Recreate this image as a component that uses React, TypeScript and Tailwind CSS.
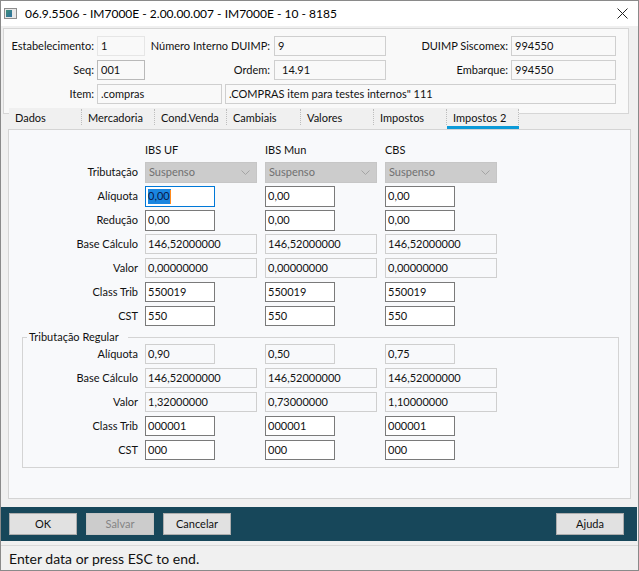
import React from "react";

type Kind = "faint" | "ro" | "roDark" | "edit" | "focus" | "disabled";

const fieldStyles: Record<Kind, string> = {
  faint: "border-[#e6e6e6] bg-[#f9f9f9]",
  ro: "border-[#cfcfcf] bg-[#f9f9f9]",
  roDark: "border-[#b9b9b9] bg-[#f9f9f9]",
  edit: "border-[#7a7a7a] bg-white",
  focus: "border-[#0078d7] bg-white",
  disabled: "border-[#cfcfcf] bg-[#f8f9fb]",
};

function Field({
  w,
  h = "h-[20px]",
  value,
  kind = "ro",
  pad = "pl-[3px]",
}: {
  w: string;
  h?: string;
  value: string;
  kind?: Kind;
  pad?: string;
}) {
  return (
    <div
      className={`${w} ${h} ${pad} shrink-0 border ${fieldStyles[kind]} flex items-center text-[11px] text-[#111] whitespace-nowrap overflow-hidden`}
    >
      {kind === "focus" ? (
        <span className="flex items-center h-[15px] bg-[#1a86e0] text-[#0a1a4a]">
          {value}
          <span className="w-px h-[14px] bg-[#ff8a1c]" />
        </span>
      ) : (
        value
      )}
    </div>
  );
}

function Select() {
  return (
    <div className="w-[112px] h-[21px] border border-[#c6c6c6] bg-[#cccccc] flex items-center justify-between pl-[3px] pr-[6px] text-[11px] text-[#707070]">
      <span>Suspenso</span>
      <svg width="9" height="6" viewBox="0 0 9 6">
        <path d="M0.5 0.5 L4.5 4.5 L8.5 0.5" fill="none" stroke="#a4a4a4" strokeWidth="1" />
      </svg>
    </div>
  );
}

type Cell = { value: string; kind: Kind; wide?: boolean };

function TaxRow({
  label,
  labelW,
  cells,
  tall = false,
  select = false,
}: {
  label: string;
  labelW: string;
  cells: Cell[];
  tall?: boolean;
  select?: boolean;
}) {
  const h = tall ? "h-[21px]" : "h-[20px]";
  return (
    <div className="h-[24px] flex items-start">
      <div className={`${labelW} ${h} shrink-0 flex items-center justify-end pr-[7px] text-[11px] text-[#111]`}>
        {label}
      </div>
      {cells.map((c, i) => (
        <div key={i} className="w-[120px] shrink-0">
          {select ? (
            <Select />
          ) : (
            <Field w={c.wide ? "w-[112px]" : "w-[70px]"} h={h} value={c.value} kind={c.kind} pad="pl-[2px]" />
          )}
        </div>
      ))}
    </div>
  );
}

function Label({ w, text }: { w: string; text: string }) {
  return <div className={`${w} shrink-0 flex justify-end whitespace-nowrap`}>{text}</div>;
}

const tabs = [
  { label: "Dados", w: "w-[73px]" },
  { label: "Mercadoria", w: "w-[73px]" },
  { label: "Cond.Venda", w: "w-[72px]" },
  { label: "Cambiais", w: "w-[74px]" },
  { label: "Valores", w: "w-[73px]" },
  { label: "Impostos", w: "w-[73px]" },
  { label: "Impostos 2", w: "w-[72px]", active: true },
];

function Button({ label, disabled = false }: { label: string; disabled?: boolean }) {
  return (
    <div
      className={`w-[68px] h-[22px] border flex items-center justify-center text-[11px] ${
        disabled
          ? "bg-[#cccccc] border-[#c4c4c4] text-[#858585]"
          : "bg-[#e1e1e1] border-[#adadad] text-[#111]"
      }`}
    >
      {label}
    </div>
  );
}

export default function App() {
  const three = (v: string, kind: Kind, wide = false): Cell[] => [
    { value: v, kind, wide },
    { value: v, kind, wide },
    { value: v, kind, wide },
  ];

  return (
    <div className="w-[639px] h-[571px] border border-[#8a8a8a] bg-[#f0f0f0] flex flex-col font-['Lato',sans-serif] text-[#111] overflow-hidden">
      {/* title bar */}
      <div className="h-[25px] shrink-0 bg-white flex items-center">
        <svg className="ml-[3px]" width="13" height="11" viewBox="0 0 13 11">
          <rect x="0.5" y="0.5" width="12" height="10" fill="#e8e8e8" stroke="#8d8d8d" />
          <defs>
            <linearGradient id="ic" x1="0" y1="0" x2="1" y2="1">
              <stop offset="0" stopColor="#3f8f7a" />
              <stop offset="1" stopColor="#2d6fa0" />
            </linearGradient>
          </defs>
          <rect x="2" y="2" width="6" height="7" fill="url(#ic)" />
        </svg>
        <span className="ml-[8px] text-[12px] text-black">
          06.9.5506 - IM7000E - 2.00.00.007 - IM7000E - 10 - 8185
        </span>
        <svg className="ml-auto mr-[10px]" width="11" height="11" viewBox="0 0 11 11">
          <path d="M0.5 0.5 L10.5 10.5 M10.5 0.5 L0.5 10.5" stroke="#222" strokeWidth="1" />
        </svg>
      </div>

      {/* header panel */}
      <div className="mt-[2px] ml-[2px] w-[626px] h-[80px] shrink-0 border-x border-t border-[#d6d6d6] bg-[#f9f9f9] pt-[7px] flex flex-col gap-[4px] text-[11px]">
        <div className="flex items-center h-[20px]">
          <Label w="w-[90px]" text="Estabelecimento:" />
          <div className="ml-[3px]">
            <Field w="w-[48px]" value="1" kind="faint" />
          </div>
          <Label w="w-[125px]" text="Número Interno DUIMP:" />
          <div className="ml-[4px]">
            <Field w="w-[112px]" value="9" kind="ro" />
          </div>
          <Label w="w-[122px]" text="DUIMP Siscomex:" />
          <div className="ml-[3px]">
            <Field w="w-[105px]" value="994550" kind="ro" />
          </div>
        </div>
        <div className="flex items-center h-[20px]">
          <Label w="w-[90px]" text="Seq:" />
          <div className="ml-[3px]">
            <Field w="w-[48px]" value="001" kind="roDark" />
          </div>
          <Label w="w-[125px]" text="Ordem:" />
          <div className="ml-[4px]">
            <Field w="w-[112px]" value="14.91" kind="ro" pad="pl-[7px]" />
          </div>
          <Label w="w-[122px]" text="Embarque:" />
          <div className="ml-[3px]">
            <Field w="w-[105px]" value="994550" kind="ro" />
          </div>
        </div>
        <div className="flex items-center h-[20px]">
          <Label w="w-[90px]" text="Item:" />
          <div className="ml-[3px]">
            <Field w="w-[125px]" value=".compras" kind="ro" />
          </div>
          <div className="ml-[3px]">
            <Field w="w-[391px]" value={'.COMPRAS item para testes internos" 111'} kind="ro" />
          </div>
        </div>
      </div>

      {/* tab strip */}
      <div className="ml-[2px] w-[626px] h-[21px] shrink-0 flex">
        <div className="w-[6px] h-[6px] border-l border-b border-[#d6d6d6] bg-[#f9f9f9]" />
        {tabs.map((t) => (
          <div key={t.label} className={`${t.w} h-full flex flex-col`}>
            <div className="h-[18px] flex items-center">
              <span className="flex-1 pl-[6px] text-[11px] text-[#111] leading-[15px]">{t.label}</span>
              <span className="w-px h-[16px] border-r border-dotted border-[#bdbdbd]" />
            </div>
            <div className={`h-[3px] ${t.active ? "bg-[#0b9ad8]" : ""}`} />
          </div>
        ))}
        <div className="flex-1 h-[6px] border-r border-b border-[#d6d6d6] bg-[#f9f9f9]" />
      </div>

      {/* content panel */}
      <div className="ml-[7px] w-[623px] h-[370px] shrink-0 border border-[#d4d4d4] bg-[#f8f9fb] flex flex-col">
        <div className="h-[32px] flex pt-[12px] text-[11px] leading-[16px]">
          <div className="w-[136px]" />
          <div className="w-[120px]">IBS UF</div>
          <div className="w-[120px]">IBS Mun</div>
          <div className="w-[120px]">CBS</div>
        </div>
        <TaxRow label="Tributação" labelW="w-[136px]" cells={three("", "edit")} tall select />
        <TaxRow
          label="Alíquota"
          labelW="w-[136px]"
          tall
          cells={[
            { value: "0,00", kind: "focus" },
            { value: "0,00", kind: "edit" },
            { value: "0,00", kind: "edit" },
          ]}
        />
        <TaxRow label="Redução" labelW="w-[136px]" tall cells={three("0,00", "edit")} />
        <TaxRow label="Base Cálculo" labelW="w-[136px]" cells={three("146,52000000", "disabled", true)} />
        <TaxRow label="Valor" labelW="w-[136px]" cells={three("0,00000000", "disabled", true)} />
        <TaxRow label="Class Trib" labelW="w-[136px]" cells={three("550019", "edit")} />
        <TaxRow label="CST" labelW="w-[136px]" cells={three("550", "edit")} />

        <fieldset className="ml-[13px] w-[597px] border border-[#d4d4d4] pb-[3px]">
          <legend className="ml-[4px] pl-[2px] pr-[9px] text-[11px] leading-[14px]">Tributação Regular</legend>
          <TaxRow
            label="Alíquota"
            labelW="w-[122px]"
            cells={[
              { value: "0,90", kind: "disabled" },
              { value: "0,50", kind: "disabled" },
              { value: "0,75", kind: "disabled" },
            ]}
          />
          <TaxRow label="Base Cálculo" labelW="w-[122px]" cells={three("146,52000000", "disabled", true)} />
          <TaxRow
            label="Valor"
            labelW="w-[122px]"
            cells={[
              { value: "1,32000000", kind: "disabled", wide: true },
              { value: "0,73000000", kind: "disabled", wide: true },
              { value: "1,10000000", kind: "disabled", wide: true },
            ]}
          />
          <TaxRow label="Class Trib" labelW="w-[122px]" cells={three("000001", "edit")} />
          <TaxRow label="CST" labelW="w-[122px]" cells={three("000", "edit")} />
        </fieldset>
      </div>

      {/* button bar */}
      <div className="mt-[8px] w-[636px] h-[34px] shrink-0 bg-[#17475a] flex items-start pt-[6px] pl-[8px] pr-[13px] gap-[9px]">
        <Button label="OK" />
        <Button label="Salvar" disabled />
        <Button label="Cancelar" />
        <div className="flex-1" />
        <Button label="Ajuda" />
      </div>

      {/* status bar */}
      <div className="h-[4px] shrink-0" />
      <div className="flex-1 border-t border-[#d9d9d9] flex items-center pl-[8px] text-[14px] text-[#111]">
        Enter data or press ESC to end.
      </div>
    </div>
  );
}
